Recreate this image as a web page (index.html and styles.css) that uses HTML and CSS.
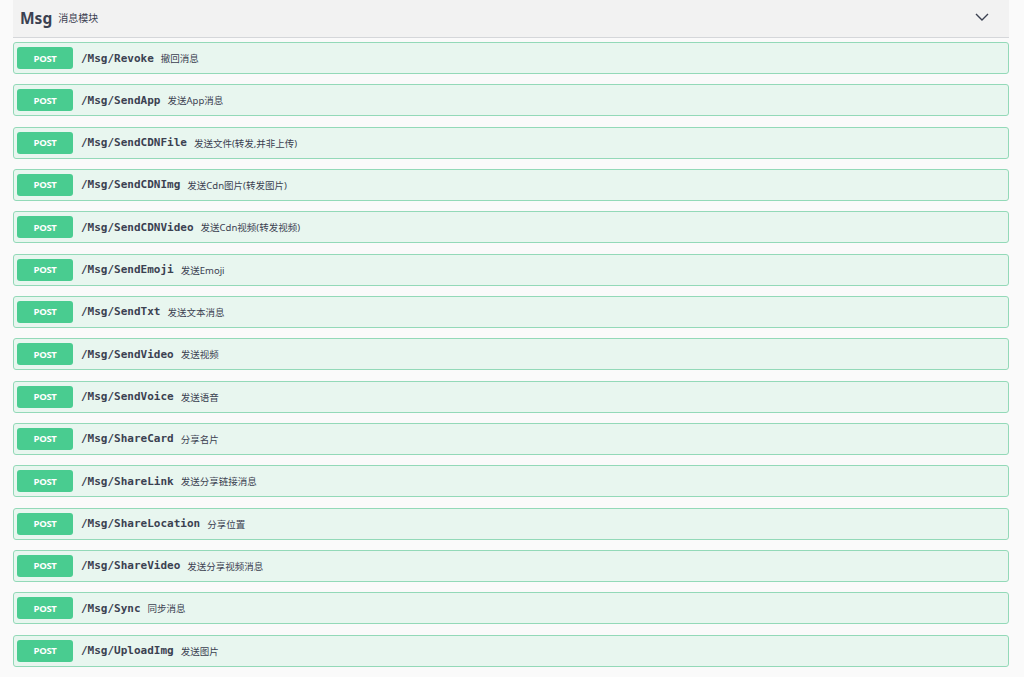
FILE: index.html
```html
<!DOCTYPE html>
<html lang="zh">
  <head>
    <meta charset="UTF-8" />
    <meta name="viewport" content="width=device-width, initial-scale=1.0" />
    <title>Msg</title>
    <link rel="stylesheet" href="styles.css">
  </head>
  <body>
    <div class="tag-section">
      <h3 class="opblock-tag">
        <span class="opblock-tag__name">Msg</span>
        <small class="opblock-tag__desc">消息模块</small>
        <svg class="opblock-tag__arrow" viewBox="0 0 14 8" width="14" height="8">
          <path d="M1 1 L7 7 L13 1" fill="none" stroke="#3b4151" stroke-width="1.4" />
        </svg>
      </h3>

      <div class="opblock-list">
        <div class="opblock"><span class="opblock__method">POST</span><span class="opblock__path">/Msg/Revoke</span><span class="opblock__desc">撤回消息</span></div>
        <div class="opblock"><span class="opblock__method">POST</span><span class="opblock__path">/Msg/SendApp</span><span class="opblock__desc">发送App消息</span></div>
        <div class="opblock"><span class="opblock__method">POST</span><span class="opblock__path">/Msg/SendCDNFile</span><span class="opblock__desc">发送文件(转发,并非上传)</span></div>
        <div class="opblock"><span class="opblock__method">POST</span><span class="opblock__path">/Msg/SendCDNImg</span><span class="opblock__desc">发送Cdn图片(转发图片)</span></div>
        <div class="opblock"><span class="opblock__method">POST</span><span class="opblock__path">/Msg/SendCDNVideo</span><span class="opblock__desc">发送Cdn视频(转发视频)</span></div>
        <div class="opblock"><span class="opblock__method">POST</span><span class="opblock__path">/Msg/SendEmoji</span><span class="opblock__desc">发送Emoji</span></div>
        <div class="opblock"><span class="opblock__method">POST</span><span class="opblock__path">/Msg/SendTxt</span><span class="opblock__desc">发送文本消息</span></div>
        <div class="opblock"><span class="opblock__method">POST</span><span class="opblock__path">/Msg/SendVideo</span><span class="opblock__desc">发送视频</span></div>
        <div class="opblock"><span class="opblock__method">POST</span><span class="opblock__path">/Msg/SendVoice</span><span class="opblock__desc">发送语音</span></div>
        <div class="opblock"><span class="opblock__method">POST</span><span class="opblock__path">/Msg/ShareCard</span><span class="opblock__desc">分享名片</span></div>
        <div class="opblock"><span class="opblock__method">POST</span><span class="opblock__path">/Msg/ShareLink</span><span class="opblock__desc">发送分享链接消息</span></div>
        <div class="opblock"><span class="opblock__method">POST</span><span class="opblock__path">/Msg/ShareLocation</span><span class="opblock__desc">分享位置</span></div>
        <div class="opblock"><span class="opblock__method">POST</span><span class="opblock__path">/Msg/ShareVideo</span><span class="opblock__desc">发送分享视频消息</span></div>
        <div class="opblock"><span class="opblock__method">POST</span><span class="opblock__path">/Msg/Sync</span><span class="opblock__desc">同步消息</span></div>
        <div class="opblock"><span class="opblock__method">POST</span><span class="opblock__path">/Msg/UploadImg</span><span class="opblock__desc">发送图片</span></div>
      </div>
    </div>
  </body>
</html>
```

FILE: styles.css
```css
body {
  margin: 0;
  padding: 0;
  background-color: #fafafa;
  font-family: "Noto Sans", "Noto Sans CJK SC", sans-serif;
  color: #3b4151;
}

.tag-section {
  margin-left: 13px;
  width: 996px;
}

.opblock-tag {
  display: flex;
  align-items: center;
  height: 38px;
  margin: 0;
  padding: 0 20px 0 7px;
  box-sizing: border-box;
  background-color: #f2f2f2;
  border-bottom: 1px solid #d5d7da;
}

.opblock-tag__name {
  font-size: 15.5px;
  font-weight: 700;
  margin-top: -1px;
}

.opblock-tag__desc {
  font-size: 10px;
  font-weight: 400;
  font-family: "Noto Sans CJK SC", sans-serif;
  margin-left: 6px;
  margin-top: -3px;
}

.opblock-tag__arrow {
  margin-left: auto;
  margin-top: -4px;
}

.opblock-list {
  padding-top: 4px;
}

.opblock {
  display: flex;
  align-items: center;
  height: 32px;
  margin-bottom: 10.333px;
  padding: 0 3px;
  box-sizing: border-box;
  background-color: #e8f6ef;
  border: 1px solid #93d9b8;
  border-radius: 3px;
}

.opblock__method {
  display: flex;
  align-items: center;
  justify-content: center;
  width: 56px;
  height: 22px;
  background-color: #49cc90;
  color: #fff;
  border-radius: 3px;
  font-size: 9.5px;
  font-weight: 700;
  font-family: "Open Sans", sans-serif;
  letter-spacing: -0.3px;
}

.opblock__path {
  margin-left: 8px;
  font-family: "DejaVu Sans Mono", monospace;
  font-size: 11px;
  font-weight: 700;
  color: #3b4151;
}

.opblock__desc {
  margin-left: 7px;
  font-size: 9.5px;
  font-family: "Noto Sans", "Noto Sans CJK SC", sans-serif;
}
```
